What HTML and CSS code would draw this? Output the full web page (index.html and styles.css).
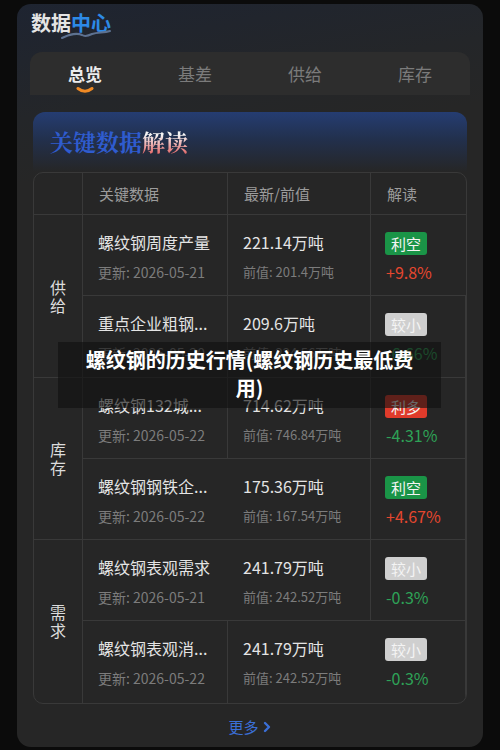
FILE: index.html
```html
<!DOCTYPE html>
<html lang="zh-CN">

<head>
    <meta charset="UTF-8">
    <meta name="viewport" content="width=device-width, initial-scale=1.0">
    <title>数据中心</title>
    <link rel="stylesheet" href="styles.css">
</head>

<body>
    <div class="app">
        <header class="top">
            <h1 class="brand">数据<span class="brand-blue">中心</span></h1>
            <svg class="swoosh" width="52" height="12" viewBox="0 0 52 12">
                <path d="M2 10 C10 6, 18 5, 22 7 C25 9, 28 8, 32 6 C38 4, 44 5, 50 3" fill="none" stroke="#5d7190" stroke-width="2" stroke-linecap="round" />
            </svg>
        </header>

        <nav class="tabs">
            <div class="tab active">总览
                <svg class="smile" width="18" height="6" viewBox="0 0 18 6">
                    <path d="M2 1.5 Q9 7, 16 1.5" fill="none" stroke="#f08a24" stroke-width="3" stroke-linecap="round" />
                </svg>
            </div>
            <div class="tab">基差</div>
            <div class="tab">供给</div>
            <div class="tab">库存</div>
        </nav>

        <div class="banner">
            <h2><span class="blue">关键数据</span><span class="accent">解读</span></h2>
        </div>

        <div class="table">
            <div class="th"></div>
            <div class="th">关键数据</div>
            <div class="th">最新/前值</div>
            <div class="th">解读</div>

            <!-- 供给 -->
            <div class="cat span2">供<br>给</div>
            <div class="cell">
                <div class="name">螺纹钢周度产量</div>
                <div class="sub">更新: 2026-05-21</div>
            </div>
            <div class="cell">
                <div class="val">221.14万吨</div>
                <div class="sub small">前值: 201.4万吨</div>
            </div>
            <div class="cell">
                <span class="tag green">利空</span>
                <div class="pct up">+9.8%</div>
            </div>

            <div class="cell">
                <div class="name">重点企业粗钢...</div>
                <div class="sub">更新: 2026-05-20</div>
            </div>
            <div class="cell">
                <div class="val">209.6万吨</div>
                <div class="sub small">前值: 224.56万吨</div>
            </div>
            <div class="cell">
                <span class="tag grey">较小</span>
                <div class="pct down">-6.66%</div>
            </div>

            <!-- 库存 -->
            <div class="cat span2">库<br>存</div>
            <div class="cell">
                <div class="name">螺纹钢132城...</div>
                <div class="sub">更新: 2026-05-22</div>
            </div>
            <div class="cell">
                <div class="val">714.62万吨</div>
                <div class="sub small">前值: 746.84万吨</div>
            </div>
            <div class="cell">
                <span class="tag red">利多</span>
                <div class="pct down">-4.31%</div>
            </div>

            <div class="cell">
                <div class="name">螺纹钢钢铁企...</div>
                <div class="sub">更新: 2026-05-22</div>
            </div>
            <div class="cell">
                <div class="val">175.36万吨</div>
                <div class="sub small">前值: 167.54万吨</div>
            </div>
            <div class="cell">
                <span class="tag green">利空</span>
                <div class="pct up">+4.67%</div>
            </div>

            <!-- 需求 -->
            <div class="cat span2 last">需<br>求</div>
            <div class="cell">
                <div class="name">螺纹钢表观需求</div>
                <div class="sub">更新: 2026-05-21</div>
            </div>
            <div class="cell">
                <div class="val">241.79万吨</div>
                <div class="sub small">前值: 242.52万吨</div>
            </div>
            <div class="cell">
                <span class="tag grey">较小</span>
                <div class="pct down">-0.3%</div>
            </div>

            <div class="cell last">
                <div class="name">螺纹钢表观消...</div>
                <div class="sub">更新: 2026-05-22</div>
            </div>
            <div class="cell last">
                <div class="val">241.79万吨</div>
                <div class="sub small">前值: 242.52万吨</div>
            </div>
            <div class="cell last">
                <span class="tag grey">较小</span>
                <div class="pct down">-0.3%</div>
            </div>
        </div>

        <a class="more" href="#">更多
            <svg width="10" height="12" viewBox="0 0 10 12">
                <path d="M3 2 L7 6 L3 10" fill="none" stroke="#3b6fd6" stroke-width="2.4" stroke-linecap="round" stroke-linejoin="round" />
            </svg>
        </a>
    </div>

    <div class="overlay">螺纹钢的历史行情(螺纹钢历史最低费用)</div>
</body>

</html>
```

FILE: styles.css
```css
body {
    margin: 0;
    width: 500px;
    height: 750px;
    background: #0b0b0b;
    font-family: "Noto Sans CJK SC", "Noto Sans", sans-serif;
    color: #e6e6e6;
    overflow: hidden;
    position: relative;
}

.app {
    margin: 4px 17px 0 17px;
    height: 743px;
    box-sizing: border-box;
    border-radius: 14px;
    padding: 0 13px;
    background: linear-gradient(170deg, #1e2431 0%, #242629 14%, #262626 22%);
}

.top {
    height: 48px;
    padding-left: 1px;
    position: relative;
}

.brand {
    margin: 0;
    padding-top: 5px;
    font-size: 20px;
    font-weight: 700;
    line-height: 28px;
    color: #e4e4e4;
    letter-spacing: 0;
}

.brand-blue {
    color: #2d8ae6;
}

.swoosh {
    position: absolute;
    left: 30px;
    top: 24px;
}

/* tabs */
.tabs {
    display: flex;
    height: 43px;
    background: #2d2d2d;
    border-radius: 12px 12px 0 0;
}

.tab {
    flex: 1;
    text-align: center;
    font-size: 17px;
    line-height: 43px;
    color: #7b7b7b;
    position: relative;
}

.tab.active {
    color: #ececec;
    font-weight: 700;
}

.smile {
    position: absolute;
    left: 46px;
    top: 35px;
}

/* banner */
.banner {
    margin: 17px 3px 0 3px;
    height: 60px;
    border-radius: 12px 12px 0 0;
    background: linear-gradient(180deg, #253d72 0%, #22304d 45%, #262626 100%);
    padding-left: 17px;
    box-sizing: border-box;
}

.banner h2 {
    margin: 0;
    font-size: 23px;
    line-height: 60px;
    font-weight: 700;
    font-family: "Noto Serif CJK SC", "Noto Sans CJK SC", serif;
}

.blue {
    color: #2f5ccf;
}

.accent {
    background: linear-gradient(180deg, #f4f4f4 30%, #e04a4a 100%);
    -webkit-background-clip: text;
    -webkit-text-fill-color: transparent;
}

/* table */
.table {
    margin: 0 3px;
    display: grid;
    grid-template-columns: 49px 145px 143px 1fr;
    grid-template-rows: 42px repeat(6, 81.3px);
    border: 1px solid #393939;
    border-radius: 10px;
    overflow: hidden;
}

.th {
    font-size: 15px;
    color: #9c9c9c;
    line-height: 42px;
    padding-left: 16px;
    border-bottom: 1px solid #393939;
    border-right: 1px solid #393939;
}

.th:first-child {
    padding: 0;
}

.th:nth-child(4) {
    border-right: none;
}

.cat {
    display: flex;
    align-items: center;
    justify-content: center;
    text-align: center;
    font-size: 16px;
    line-height: 18px;
    color: #dcdcdc;
    border-right: 1px solid #393939;
    border-bottom: 1px solid #393939;
}

.span2 {
    grid-row: span 2;
}

.cell {
    padding: 16px 0 0 15px;
    border-right: 1px solid #393939;
    border-bottom: 1px solid #393939;
    white-space: nowrap;
}

.cell:nth-child(4n) {
    border-right: none;
}

.cat.last,
.cell.last {
    border-bottom: none;
}

.name,
.val {
    font-size: 16px;
    line-height: 22px;
    color: #e4e4e4;
}

.sub {
    margin-top: 10px;
    font-size: 14px;
    line-height: 18px;
    color: #7c7c7c;
}

.sub.small {
    font-size: 13px;
}

.tag {
    display: inline-block;
    margin-left: -1px;
    padding: 0 6px;
    height: 23px;
    line-height: 23px;
    border-radius: 3px;
    font-size: 15px;
    color: #f4f4f4;
}

.tag.green {
    background: #1a9447;
}

.tag.grey {
    background: #cfcfcf;
}

.tag.red {
    background: #e03b2b;
}

.pct {
    margin-top: 8px;
    font-size: 16px;
    line-height: 18px;
}

.pct.up {
    color: #e5472f;
}

.pct.down {
    color: #2ea257;
}

/* more link */
.more {
    display: flex;
    justify-content: center;
    align-items: center;
    gap: 3px;
    margin-top: 12px;
    font-size: 15px;
    line-height: 22px;
    color: #3b6fd6;
    text-decoration: none;
}

/* title overlay */
.overlay {
    position: absolute;
    left: 58px;
    top: 342px;
    width: 383px;
    height: 66px;
    box-sizing: border-box;
    padding: 4px 14px 0 14px;
    background: rgba(16, 16, 16, 0.62);
    font-size: 20px;
    font-weight: 700;
    line-height: 28px;
    color: #fff;
    text-align: center;
}
```
